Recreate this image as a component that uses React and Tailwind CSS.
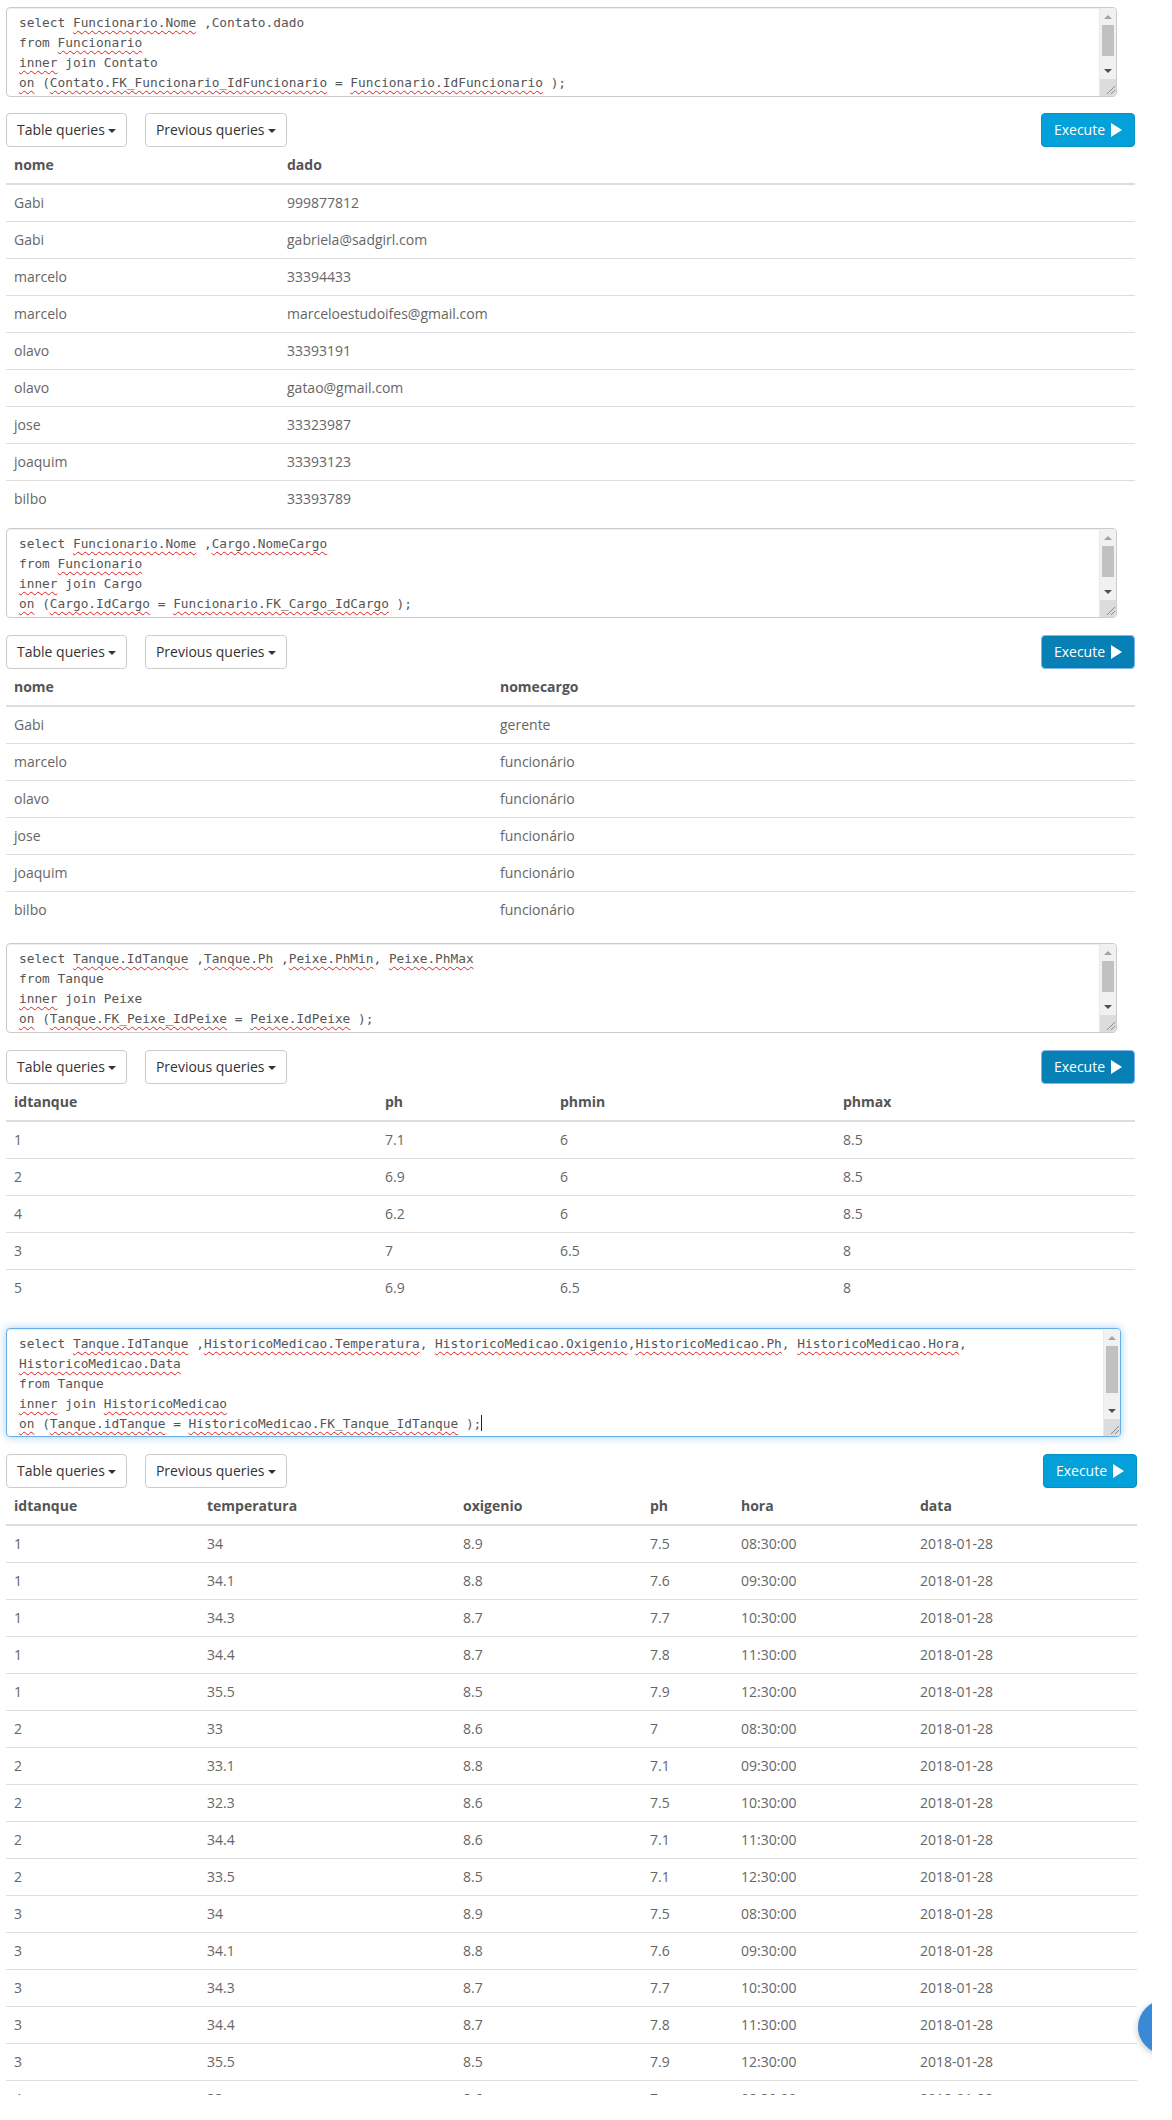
const BLOCKS = [
  {
    lines: [
      "select ~Funcionario.Nome~ ,Contato.dado",
      "from ~Funcionario~",
      "~inner~ join Contato",
      "~on~ (~Contato.FK_Funcionario_IdFuncionario~ = ~Funcionario.IdFuncionario~ );",
    ],
    boxH: "h-[90px]",
    boxW: "w-[1111px]",
    thumb: "top-[17px] h-[31px]",
    focus: false,
    active: false,
    barTop: "mt-4",
    cols: ["w-[273px]", ""],
    head: ["nome", "dado"],
    rows: [
      ["Gabi", "999877812"],
      ["Gabi", "gabriela@sadgirl.com"],
      ["marcelo", "33394433"],
      ["marcelo", "marceloestudoifes@gmail.com"],
      ["olavo", "33393191"],
      ["olavo", "gatao@gmail.com"],
      ["jose", "33323987"],
      ["joaquim", "33393123"],
      ["bilbo", "33393789"],
    ],
    wrap: "w-[1129px] mt-0",
  },
  {
    lines: [
      "select ~Funcionario.Nome~ ,~Cargo.NomeCargo~",
      "from ~Funcionario~",
      "~inner~ join Cargo",
      "~on~ (~Cargo.IdCargo~ = ~Funcionario.FK_Cargo_IdCargo~ );",
    ],
    boxH: "h-[90px]",
    boxW: "w-[1111px]",
    thumb: "top-[17px] h-[31px]",
    focus: false,
    active: true,
    barTop: "mt-[17px]",
    cols: ["w-[486px]", ""],
    head: ["nome", "nomecargo"],
    rows: [
      ["Gabi", "gerente"],
      ["marcelo", "funcionário"],
      ["olavo", "funcionário"],
      ["jose", "funcionário"],
      ["joaquim", "funcionário"],
      ["bilbo", "funcionário"],
    ],
    wrap: "w-[1129px] mt-[11px]",
  },
  {
    lines: [
      "select ~Tanque.IdTanque~ ,~Tanque.Ph~ ,~Peixe.PhMin~, ~Peixe.PhMax~",
      "from Tanque",
      "~inner~ join Peixe",
      "~on~ (~Tanque.FK_Peixe_IdPeixe~ = ~Peixe.IdPeixe~ );",
    ],
    boxH: "h-[90px]",
    boxW: "w-[1111px]",
    thumb: "top-[17px] h-[31px]",
    focus: false,
    active: true,
    barTop: "mt-[17px]",
    cols: ["w-[371px]", "w-[175px]", "w-[283px]", ""],
    head: ["idtanque", "ph", "phmin", "phmax"],
    rows: [
      ["1", "7.1", "6", "8.5"],
      ["2", "6.9", "6", "8.5"],
      ["4", "6.2", "6", "8.5"],
      ["3", "7", "6.5", "8"],
      ["5", "6.9", "6.5", "8"],
    ],
    wrap: "w-[1129px] mt-[15px]",
  },
  {
    lines: [
      "select ~Tanque.IdTanque~ ,~HistoricoMedicao.Temperatura~, ~HistoricoMedicao.Oxigenio~,~HistoricoMedicao.Ph~, ~HistoricoMedicao.Hora~,",
      "~HistoricoMedicao.Data~",
      "from Tanque",
      "~inner~ join ~HistoricoMedicao~",
      "~on~ (~Tanque.idTanque~ = ~HistoricoMedicao.FK_Tanque_IdTanque~ );|",
    ],
    boxH: "h-[109px]",
    boxW: "w-[1115px]",
    thumb: "top-[17px] h-[47px]",
    focus: true,
    active: false,
    barTop: "mt-[17px]",
    cols: ["w-[193px]", "w-[256px]", "w-[187px]", "w-[91px]", "w-[179px]", ""],
    head: ["idtanque", "temperatura", "oxigenio", "ph", "hora", "data"],
    rows: [
      ["1", "34", "8.9", "7.5", "08:30:00", "2018-01-28"],
      ["1", "34.1", "8.8", "7.6", "09:30:00", "2018-01-28"],
      ["1", "34.3", "8.7", "7.7", "10:30:00", "2018-01-28"],
      ["1", "34.4", "8.7", "7.8", "11:30:00", "2018-01-28"],
      ["1", "35.5", "8.5", "7.9", "12:30:00", "2018-01-28"],
      ["2", "33", "8.6", "7", "08:30:00", "2018-01-28"],
      ["2", "33.1", "8.8", "7.1", "09:30:00", "2018-01-28"],
      ["2", "32.3", "8.6", "7.5", "10:30:00", "2018-01-28"],
      ["2", "34.4", "8.6", "7.1", "11:30:00", "2018-01-28"],
      ["2", "33.5", "8.5", "7.1", "12:30:00", "2018-01-28"],
      ["3", "34", "8.9", "7.5", "08:30:00", "2018-01-28"],
      ["3", "34.1", "8.8", "7.6", "09:30:00", "2018-01-28"],
      ["3", "34.3", "8.7", "7.7", "10:30:00", "2018-01-28"],
      ["3", "34.4", "8.7", "7.8", "11:30:00", "2018-01-28"],
      ["3", "35.5", "8.5", "7.9", "12:30:00", "2018-01-28"],
      ["4", "33", "8.6", "7", "08:30:00", "2018-01-28"],
    ],
    wrap: "w-[1131px] mt-[22px]",
  },
];

// "~word~" marks a spell-checked (red squiggle) word, "|" the caret
const SqlLine = ({ text }) => {
  const parts = text.split("~");
  return (
    <div>
      {parts.map((p, i) => {
        if (i % 2 === 1) {
          return (
            <span
              key={i}
              className="underline decoration-wavy decoration-[#e02020] decoration-1 underline-offset-[3px]"
            >
              {p}
            </span>
          );
        }
        if (p.endsWith("|")) {
          return (
            <span key={i}>
              {p.slice(0, -1)}
              <span className="inline-block w-px h-[16px] bg-[#222] align-[-3px]" />
            </span>
          );
        }
        return <span key={i}>{p}</span>;
      })}
    </div>
  );
};

const Scrollbar = ({ thumb }) => (
  <div className="absolute top-0 right-0 bottom-0 w-[17px] bg-[#f1f1f1] border-l border-[#e8e8e8] flex flex-col">
    <div className="h-[17px] flex items-center justify-center">
      <span className="w-0 h-0 border-b-4 border-x-4 border-x-transparent border-b-[#a3a3a3]" />
    </div>
    <div className={`absolute left-[2px] right-[2px] bg-[#c1c1c1] ${thumb}`} />
    <div className="flex-1" />
    <div className="h-[17px] flex items-center justify-center">
      <span className="w-0 h-0 border-t-4 border-x-4 border-x-transparent border-t-[#505050]" />
    </div>
    <div className="h-[17px] bg-[#dcdcdc]">
      <svg width="17" height="17" viewBox="0 0 17 17">
        <line x1="15" y1="7" x2="7" y2="15" stroke="#8a8a8a" strokeWidth="1" />
        <line x1="15" y1="11" x2="11" y2="15" stroke="#8a8a8a" strokeWidth="1" />
      </svg>
    </div>
  </div>
);

const QueryBox = ({ block }) => (
  <div
    className={`relative ${block.boxW} ${block.boxH} rounded-[4px] border overflow-hidden bg-white ${
      block.focus
        ? "border-[#66afe9] shadow-[inset_0_1px_1px_rgba(0,0,0,0.075),0_0_8px_rgba(102,175,233,0.6)]"
        : "border-[#cccccc] shadow-[inset_0_1px_1px_rgba(0,0,0,0.075)]"
    }`}
  >
    <div className="pl-3 pt-[5px] pr-[30px] whitespace-pre font-['DejaVu_Sans_Mono',monospace] text-[12.8px] leading-5 text-[#555]">
      {block.lines.map((l, i) => (
        <SqlLine key={i} text={l} />
      ))}
    </div>
    <Scrollbar thumb={block.thumb} />
  </div>
);

const Caret = () => (
  <span className="inline-block w-0 h-0 ml-[3px] align-middle border-t-4 border-x-4 border-x-transparent border-t-[#333]" />
);

const Toolbar = ({ active, barTop }) => (
  <div className={`flex items-center h-[34px] ${barTop}`}>
    <button className="h-[34px] px-[10px] border border-[#cccccc] rounded-[4px] bg-white text-[#333] text-sm leading-5">
      Table queries
      <Caret />
    </button>
    <button className="ml-[18px] h-[34px] px-[10px] border border-[#cccccc] rounded-[4px] bg-white text-[#333] text-sm leading-5">
      Previous queries
      <Caret />
    </button>
    <button
      className={`ml-auto h-[34px] w-[94px] flex items-center justify-center gap-[6px] rounded-[4px] border text-white text-sm leading-5 ${
        active ? "bg-[#0780b5] border-[#84b5ef]" : "bg-[#04a0d9] border-[#0390c4]"
      }`}
    >
      Execute
      <svg width="11" height="14" viewBox="0 0 11 14">
        <polygon points="0,0 11,7 0,14" fill="#ffffff" />
      </svg>
    </button>
  </div>
);

const ResultTable = ({ block }) => (
  <table className="w-full table-fixed border-collapse text-sm leading-5">
    <thead>
      <tr>
        {block.head.map((h, i) => (
          <th
            key={h}
            className={`${block.cols[i]} text-left font-bold text-[#555] px-2 py-2 border-b-2 border-[#dddddd]`}
          >
            {h}
          </th>
        ))}
      </tr>
    </thead>
    <tbody>
      {block.rows.map((r, ri) => (
        <tr key={ri}>
          {r.map((c, ci) => (
            <td
              key={ci}
              className={`px-2 py-2 text-[#666] ${ri === 0 ? "" : "border-t border-[#dddddd]"}`}
            >
              {c}
            </td>
          ))}
        </tr>
      ))}
    </tbody>
  </table>
);

export default function App() {
  return (
    <div className="relative w-[1152px] h-[2095px] overflow-hidden bg-white font-['Open_Sans',sans-serif]">
      <div className="pl-[6px] pt-[7px]">
        {BLOCKS.map((b, i) => (
          <div key={i} className={b.wrap}>
            <QueryBox block={b} />
            <Toolbar active={b.active} barTop={b.barTop} />
            <ResultTable block={b} />
          </div>
        ))}
      </div>
      <div className="absolute left-[1138px] top-[2000px] w-[54px] h-[54px] rounded-full bg-[#3a89d7] shadow-[0_2px_6px_rgba(0,0,0,0.25)]" />
    </div>
  );
}
